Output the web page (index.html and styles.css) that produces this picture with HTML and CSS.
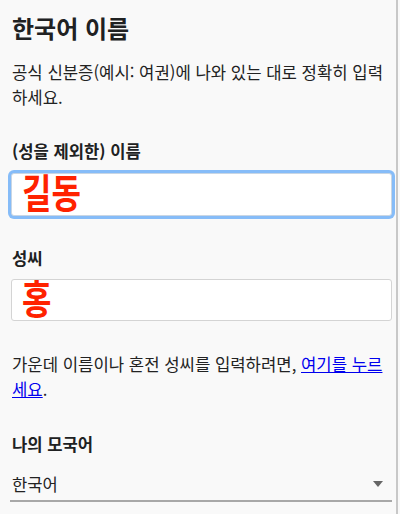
FILE: index.html
```html
<!DOCTYPE html>
<html lang="ko">
<head>
<meta charset="utf-8">
<title>한국어 이름</title>
<link rel="stylesheet" href="styles.css">
</head>
<body>
<div class="page">
  <h1 class="title">한국어 이름</h1>
  <p class="desc">공식 신분증(예시: 여권)에 나와 있는 대로 정확히 입력하세요.</p>

  <div class="field">
    <div class="label">(성을 제외한) 이름</div>
    <div class="control focused"><span class="value">길동</span></div>
  </div>

  <div class="field field-second">
    <div class="label">성씨</div>
    <div class="control"><span class="value">홍</span></div>
  </div>

  <p class="desc hint">가운데 이름이나 혼전 성씨를 입력하려면, <a href="#" class="link">여기를 누르세요</a>.</p>

  <div class="field field-lang">
    <div class="label">나의 모국어</div>
    <div class="select">
      <span class="select-value">한국어</span>
      <span class="arrow"></span>
    </div>
  </div>
</div>
<div class="scrollbar"></div>
</body>
</html>
```
FILE: styles.css
```css
html, body {
  margin: 0;
  padding: 0;
  background: #f9f9f9;
}
body {
  width: 400px;
  height: 514px;
  overflow: hidden;
  position: relative;
  font-family: "Noto Sans CJK KR", "Noto Sans", sans-serif;
  color: #222;
}
.page {
  padding: 0 8px 0 10px;
}
.title {
  margin: 12px 0 0 2px;
  font-size: 24px;
  line-height: 32px;
  font-weight: 700;
  color: #202122;
}
.desc {
  margin: 16px 0 0 2px;
  font-size: 16.7px;
  line-height: 25px;
}
.field {
  margin-top: 29px;
}
.field-second {
  margin-top: 30px;
}
.label {
  margin-left: 2px;
  font-size: 16.6px;
  line-height: 24px;
  font-weight: 700;
  color: #202122;
}
.control {
  margin-top: 10px;
  margin-left: 1px;
  height: 43px;
  box-sizing: border-box;
  background: #fff;
  border: 1px solid #d4d4d4;
  border-radius: 3px;
  padding: 0 0 0 10px;
  overflow: visible;
}
.focused {
  box-shadow: 0 0 0 3px #86bcf8;
  border-color: #c9d6e4;
}
.field-second .control {
  margin-top: 9px;
  height: 42px;
}
.value {
  display: inline-block;
  font-size: 40px;
  line-height: 40px;
  font-weight: 700;
  color: #ff2200;
  margin-top: -3px;
  transform: scaleX(0.8);
  transform-origin: left center;
}
.hint {
  margin-top: 31px;
}
.link {
  color: #0000ee;
  text-decoration: underline;
}
.field-lang {
  margin-top: 30px;
}
.select {
  margin-top: 8px;
  display: flex;
  align-items: center;
  justify-content: space-between;
  height: 38px;
  box-sizing: border-box;
  border-bottom: 2px solid #a8a8a8;
  padding: 3px 9px 0 2px;
}
.select-value {
  font-size: 16.6px;
  color: #222;
}
.arrow {
  width: 0;
  height: 0;
  border-left: 5px solid transparent;
  border-right: 5px solid transparent;
  border-top: 6px solid #666;
}
.scrollbar {
  position: absolute;
  top: 0;
  right: 2px;
  width: 2px;
  height: 514px;
  background: #c8c8c8;
}
```
